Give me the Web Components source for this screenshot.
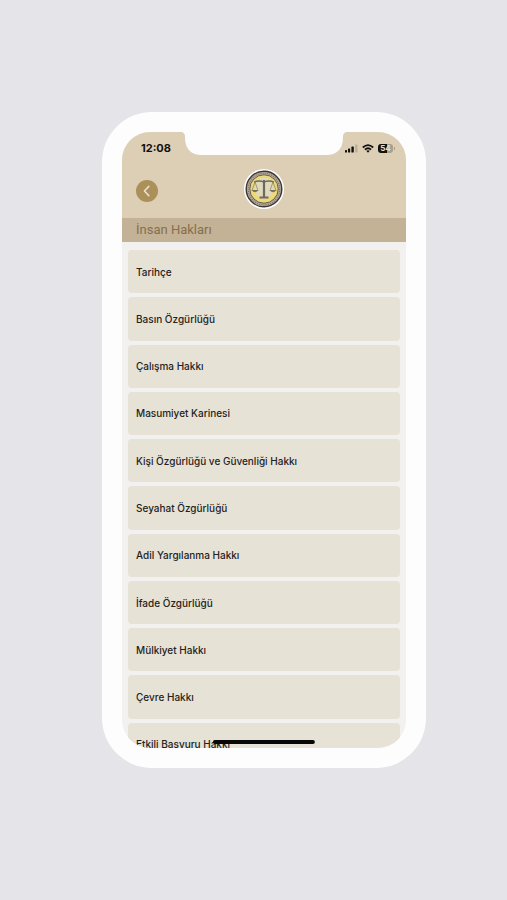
<!DOCTYPE html>
<html lang="tr">
<head>
<meta charset="utf-8">
<meta name="viewport" content="width=device-width, initial-scale=1">
<title>İnsan Hakları</title>
<style>
html{background:#e5e4e9}
body{margin:0;font-family:Inter,"Liberation Sans",sans-serif;color:#24221c}
</style>
</head>
<body>
<phone-frame>
  <status-bar slot="header" time="12:08" battery="54"></status-bar>
  <app-header slot="header"></app-header>
  <section-title slot="header">İnsan Hakları</section-title>
  <topic-list>
    <topic-item>Tarihçe</topic-item>
    <topic-item>Basın Özgürlüğü</topic-item>
    <topic-item>Çalışma Hakkı</topic-item>
    <topic-item>Masumiyet Karinesi</topic-item>
    <topic-item>Kişi Özgürlüğü ve Güvenliği Hakkı</topic-item>
    <topic-item>Seyahat Özgürlüğü</topic-item>
    <topic-item>Adil Yargılanma Hakkı</topic-item>
    <topic-item>İfade Özgürlüğü</topic-item>
    <topic-item>Mülkiyet Hakkı</topic-item>
    <topic-item>Çevre Hakkı</topic-item>
    <topic-item>Etkili Başvuru Hakkı</topic-item>
  </topic-list>
</phone-frame>
<script>
function define(name, html, setup) {
  const t = document.createElement('template');
  t.innerHTML = html;
  customElements.define(name, class extends HTMLElement {
    constructor() {
      super();
      this.attachShadow({ mode: 'open' }).append(t.content.cloneNode(true));
    }
    connectedCallback() { if (setup) setup(this, this.shadowRoot); }
  });
}

define('phone-frame', `
<style>
:host{display:block;padding:112px 81px 112px 102px}
.case{background:#fdfdfd;border-radius:50px;padding:20px}
.screen{position:relative;display:flex;flex-direction:column;aspect-ratio:284/616;min-height:0;overflow:hidden;border-radius:28px;background:#f2f1f0}
.notch{position:absolute;top:0;left:50%;transform:translateX(-50%);width:168px;height:24px;display:block}
.home{position:absolute;bottom:4px;left:50%;transform:translateX(-50%);width:36%;height:4px;border-radius:2px;background:#080808}
.content{flex:1;min-height:0;overflow:hidden}
</style>
<div class="case"><div class="screen">
  <slot name="header"></slot>
  <div class="content"><slot></slot></div>
  <svg class="notch" viewBox="0 0 168 24" aria-hidden="true"><path fill="#fdfdfd" d="M0 0C4 0 5 2 5 5C5 17 11 23 22 23H146C157 23 163 17 163 5C163 2 164 0 168 0Z"/></svg>
  <div class="home"></div>
</div></div>`);

define('status-bar', `
<style>
:host{display:flex;flex:none;justify-content:space-between;align-items:center;height:32px;padding:0 11px 0 19px;background:#dccfb6;color:#12110e}
time{font-size:11px;line-height:16px;font-weight:700}
.icons{display:flex;align-items:center;gap:4px}
svg{display:block}
.battery{display:flex;align-items:center;justify-content:center;width:15px;height:9px;border-radius:3px;font-size:8px;line-height:9px;font-weight:700;color:#e9e0cd;background:linear-gradient(90deg,#14120e 60%,#a99f8b 60%)}
.cell{display:flex;align-items:center;gap:1px}
.cell::after{content:"";width:1px;height:3px;background:#a99f8b}
</style>
<time></time>
<div class="icons">
  <svg width="13" height="9" viewBox="0 0 13 9" role="img" aria-label="Sinyal"><g fill="#12110e"><rect y="6" width="2" height="2.6" rx=".6"/><rect x="3" y="4.5" width="2.2" height="4.1" rx=".6"/><rect x="6.4" y="2.6" width="2.4" height="6" rx=".6"/></g><rect x="10.2" y=".6" width="2.2" height="8" rx=".6" fill="#b9ad97"/></svg>
  <svg width="12" height="9" viewBox="0 0 12 9" role="img" aria-label="Wi-Fi"><g fill="none" stroke="#12110e" stroke-width="1.8"><path d="M.8 3.5Q6-1.2 11.2 3.5"/><path d="M2.9 5.6Q6 2.8 9.1 5.6"/></g><path d="M4.2 6.8Q6 5.5 7.8 6.8L6 8.7Z" fill="#12110e"/></svg>
  <div class="cell"><div class="battery"></div></div>
</div>`, (el, r) => {
  r.querySelector('time').textContent = el.getAttribute('time');
  r.querySelector('.battery').textContent = el.getAttribute('battery');
});

define('app-header', `
<style>
:host{display:grid;flex:none;box-sizing:border-box;grid-template-columns:1fr 40px 1fr;align-items:center;height:54px;padding:0 14px 4px;background:#dccfb6}
button{width:22px;height:22px;padding:0;border:0;border-radius:50%;background:#ac905a;display:flex;align-items:center;justify-content:center;margin-top:4px}
svg{display:block}
</style>
<button type="button" aria-label="Geri"><svg width="10" height="12" viewBox="0 0 10 12" fill="none" stroke="#eadfc9" stroke-width="1.6" stroke-linecap="round" stroke-linejoin="round"><path d="M6.8 1.4L2.4 6L6.8 10.6"/></svg></button>
<svg width="40" height="42" viewBox="0 0 40 42" role="img" aria-label="Terazi logosu">
  <circle cx="20" cy="21" r="20" fill="#fff"/>
  <circle cx="20" cy="21" r="17.8" fill="#b5aa98" stroke="#3c3634" stroke-width="1.4"/>
  <circle cx="20" cy="21" r="15.8" fill="none" stroke="#7a7064" stroke-width="1.2" stroke-dasharray="1 1.2"/>
  <circle cx="20" cy="21" r="14.2" fill="#ecd97a" stroke="#5b534a" stroke-width=".9"/>
  <ellipse cx="20" cy="20" rx="9.5" ry="10.5" fill="#e0d9bb"/>
  <g fill="none" stroke="#6c6962">
    <path stroke-width="1.3" d="M10 14Q15 12 20 14Q25 12 30 14"/>
    <path stroke-width="2.2" d="M20 12V29"/><path stroke-width="1.8" d="M15.5 29.5H24.5"/>
    <path stroke-width=".6" d="M11 14L8 22.5M11 14L14 22.5M29 14L26 22.5M29 14L32 22.5"/>
  </g>
  <path d="M7.5 22H14.5Q11 26.5 7.5 22ZM25.5 22H32.5Q29 26.5 25.5 22Z" fill="#77735f"/>
</svg>`);

define('section-title', `
<style>
:host{display:block;flex:none;background:#c4b296;color:#846f4e;padding:0 14px}
h1{margin:0;font:400 13px/24px Roboto,"Liberation Sans",sans-serif}
</style>
<h1><slot></slot></h1>`);

define('topic-list', `
<style>
:host{display:block;padding:8px 6px 0}
nav{display:grid;grid-auto-rows:1fr;gap:4px;min-height:516px}
</style>
<nav aria-label="Konular"><slot></slot></nav>`);

define('topic-item', `
<style>
:host{display:grid}
a{display:flex;align-items:center;padding:0 8px;border-radius:4px;background:#e7e2d6;color:#24221c;font-size:10px;line-height:16px;font-weight:500;text-decoration:none;white-space:nowrap}
</style>
<a href="#"><slot></slot></a>`);
</script>
</body>
</html>
